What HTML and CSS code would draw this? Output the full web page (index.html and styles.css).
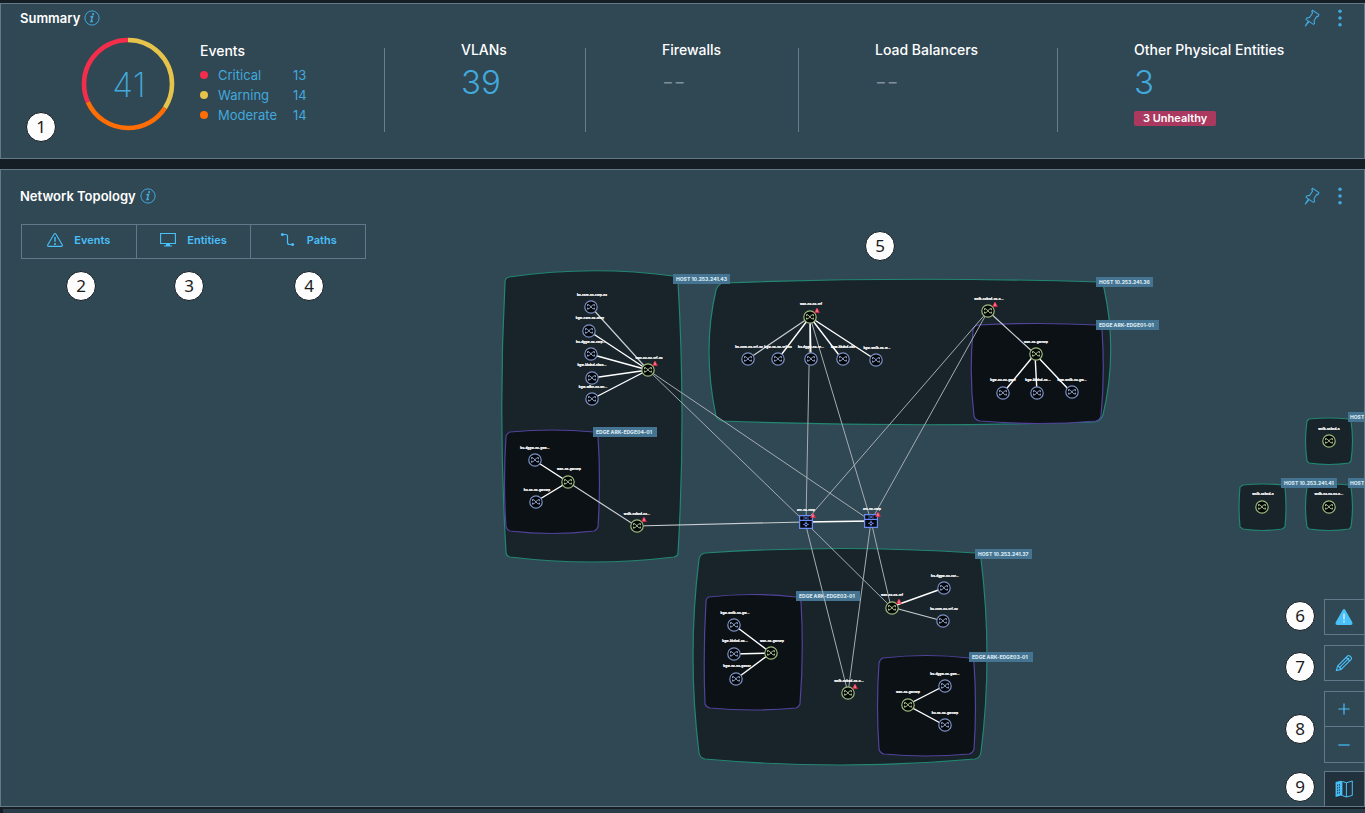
FILE: index.html
```html
<!DOCTYPE html>
<html lang="en">
<head>
<meta charset="utf-8">
<title>Network Topology</title>
<link rel="stylesheet" href="styles.css">
</head>
<body>
<svg class="defs" aria-hidden="true">
  <defs>
    <symbol id="pin" viewBox="0 0 16 18"><path d="M8.5 1.2 15 5.6 14 7.6 12.8 7.4 10 11.7 10.6 14.6 9.4 15.4 2 10.4 2.6 9 5.6 8.4 8.6 4 7.8 2.4ZM5 12.6 1 17.4M4.4 12 1.2 17" fill="none" stroke="currentColor" stroke-width="1.1" stroke-linejoin="round"/></symbol>
    <symbol id="kebab" viewBox="0 0 4 18"><circle cx="2" cy="2.2" r="1.8"/><circle cx="2" cy="9" r="1.8"/><circle cx="2" cy="15.8" r="1.8"/></symbol>
    <symbol id="info" viewBox="0 0 16 16"><circle cx="8" cy="8" r="7.1" fill="none" stroke="currentColor"/><path d="M6.4 6.8 8.6 6.4 7 11.6 9 11.2" fill="none" stroke="currentColor" stroke-width="1.4"/><circle cx="9.1" cy="4.1" r="1.1"/></symbol>
    <g id="arrows"><path d="M-3.6-2.2H-2L1.8 1.8H3.4M-3.6 1.8H-2L1.8-2.2H3.4" fill="none" stroke-width=".9"/><path d="M-3.4-2.6V-.8M3.4-2.6V-.8M-3.4 2.4V.6M3.4 2.4V.6" stroke-width=".9"/></g>
    <g id="green"><circle r="6.2" fill="#030607" stroke="#9dbb7d" stroke-width="1.2"/><use href="#arrows" stroke="#bcd3a0"/></g>
    <g id="blue"><circle r="6.2" fill="#030609" stroke="#7d92c4" stroke-width="1.2"/><use href="#arrows" stroke="#a0b3df"/></g>
    <g id="alert"><path d="M7-9 9.4-4.4H4.6Z" fill="#f5304f" stroke="#f5304f" stroke-width=".6"/><path d="M7-7.6V-5" stroke="#fff" stroke-width=".6"/></g>
    <g id="switch"><path d="M-6.4-6.4H6.4V6.4H-6.4Z" fill="#05080f" stroke="#6c8cf5" stroke-width="1.2"/><path d="M-6.4-1.6H6.4" stroke="#6c8cf5" stroke-width="1.2"/><path d="M-3-5H-1L1-3H3M-3-3H-1L1-5H3" fill="none" stroke="#5673c5" stroke-width=".8"/><circle cy="2.4" r="1.3" fill="none" stroke="#7896ff"/><path d="M0-.4V1M0 3.8V5.2M-2.8 2.4H-1.4M1.4 2.4H2.8" stroke="#7896ff" stroke-width=".9"/></g>
  </defs>
</svg>

<section class="panel summary">
  <header class="panel-head">
    <h2>Summary</h2>
    <button class="icon-btn info" aria-label="About summary"><svg><use href="#info"/></svg></button>
    <div class="actions">
      <button class="icon-btn pin" aria-label="Pin summary"><svg><use href="#pin"/></svg></button>
      <button class="icon-btn kebab" aria-label="Summary menu"><svg><use href="#kebab"/></svg></button>
    </div>
  </header>
  <div class="metrics">
    <div class="events">
      <svg class="donut" viewBox="0 0 94 94" role="img" aria-label="41 events">
        <g fill="none" stroke-width="4.6" transform="rotate(-90 47 47)">
          <circle cx="47" cy="47" r="44" pathLength="41" stroke="#e6c34a" stroke-dasharray="14 27"/>
          <circle cx="47" cy="47" r="44" pathLength="41" stroke="#ff6d05" stroke-dasharray="14 27" stroke-dashoffset="-14"/>
          <circle cx="47" cy="47" r="44" pathLength="41" stroke="#f42e4a" stroke-dasharray="13 28" stroke-dashoffset="-28"/>
        </g>
        <text x="48" y="60" text-anchor="middle">41</text>
      </svg>
      <div class="legend">
        <h3>Events</h3>
        <ul>
          <li><i class="dot critical"></i><a href="#critical">Critical</a><a href="#critical">13</a></li>
          <li><i class="dot warning"></i><a href="#warning">Warning</a><a href="#warning">14</a></li>
          <li><i class="dot moderate"></i><a href="#moderate">Moderate</a><a href="#moderate">14</a></li>
        </ul>
      </div>
    </div>
    <div class="metric"><h3>VLANs</h3><a class="value" href="#vlans">39</a></div>
    <div class="metric"><h3>Firewalls</h3><span class="value empty">--</span></div>
    <div class="metric"><h3>Load Balancers</h3><span class="value empty">--</span></div>
    <div class="metric"><h3>Other Physical Entities</h3><a class="value" href="#other">3</a><span class="tag">3 Unhealthy</span></div>
  </div>
  <span class="callout c1">1</span>
</section>

<section class="panel topology">
  <svg class="canvas" role="img" aria-label="Topology map">
    <g transform="translate(-1 -170)">
      <g class="host">
        <path d="M509 277Q592 265 673 276Q678 277 678 282Q686 418 678 553Q678 556 674 557Q592 567 510 557Q506 556 506 552Q498 417 505 282Q505 278 509 277Z"/>
        <path d="M722 283Q910 276 1098 282Q1102 283 1104 288Q1118 352 1103 415Q1101 421 1094 422Q910 428 722 421Q718 420 716 416Q702 350 716 290Q718 285 722 283Z"/>
        <path d="M705 553Q840 544 975 553Q980 554 981 559Q993 657 981 752Q980 758 975 759Q840 771 705 759Q700 758 699 753Q687 656 699 559Q700 554 705 553Z"/>
        <path d="M1309 419Q1329 417 1349 419L1351 421Q1354 441 1351 461L1349 463Q1329 466 1309 463L1307 461Q1304 441 1307 421Z"/>
        <path d="M1243 485Q1262 483 1282 485L1285 487Q1287 507 1285 527L1282 529Q1262 532 1243 529L1240 527Q1238 507 1240 487Z"/>
        <path d="M1309 485Q1329 483 1349 485L1351 487Q1354 507 1351 527L1349 529Q1329 532 1309 529L1307 527Q1304 507 1307 487Z"/>
      </g>
      <g class="edge">
        <path d="M510 432Q552 428 594 432Q597 433 598 436Q601 482 598 527Q597 530 594 531Q552 536 510 531Q507 530 506 527Q503 482 506 436Q507 433 510 432Z"/>
        <path d="M978 325Q1040 322 1098 325Q1101 326 1102 330Q1105 375 1101 416Q1100 420 1096 421Q1038 426 980 421Q975 420 974 416Q969 375 973 330Q974 326 978 325Z"/>
        <path d="M709 597Q752 592 796 597Q800 598 801 602Q804 653 800 704Q799 707 796 708Q752 712 710 708Q706 707 705 704Q703 653 706 602Q706 598 709 597Z"/>
        <path d="M883 658Q927 653 969 658Q974 659 974 663Q977 706 974 749Q973 753 969 754Q926 758 884 754Q880 753 879 749Q876 706 879 663Q880 659 883 658Z"/>
      </g>
      <g class="tag-box">
        <rect x="673" y="274" width="57" height="10"/><rect x="593" y="427" width="64" height="10"/><rect x="1096" y="277" width="57" height="10"/><rect x="1096" y="320" width="63" height="10"/><rect x="975" y="549" width="57" height="10"/><rect x="969" y="652" width="64" height="10"/><rect x="796" y="591" width="64" height="10"/><rect x="1281" y="478" width="56" height="10"/><rect x="1348" y="412" width="57" height="10"/><rect x="1348" y="478" width="57" height="10"/>
      </g>
      <g class="tag-text">
        <text x="676" y="281">HOST 10.253.241.43</text><text x="596" y="434">EDGE ARK-EDGE04-01</text><text x="1099" y="284">HOST 10.253.241.36</text><text x="1099" y="327">EDGE ARK-EDGE01-01</text><text x="978" y="556">HOST 10.253.241.37</text><text x="972" y="659">EDGE ARK-EDGE03-01</text><text x="799" y="598">EDGE ARK-EDGE02-01</text><text x="1284" y="485">HOST 10.253.241.41</text><text x="1350" y="419">HOST</text><text x="1350" y="485">HOST</text>
      </g>
      <path class="link far" d="M648 370 805 522M648 370 871 521M810 317 806 522M810 317 871 521M988 311 805 522M988 311 871 521M805 522 891 607M805 522 848 693M871 521 891 607M871 521 848 693"/>
      <path class="link mid" d="M591 307 648 370M568 482 636 526 805 522M810 317 748 359M988 311 1035 354M891 607 943 621"/>
      <path class="link near" d="M589 331 648 370M590 354 648 370M592 378 648 370M592 399 648 370M534 460 568 482 535 502M810 317 778 359M810 317 811 359M810 317 842 359M810 317 876 360M1035 354 1003 393M1035 354 1037 393M1035 354 1071 392M805 522 871 521M891 607 944 588M734 625 771 653 734 654M771 653 736 679M944 686 907 705 944 725"/>
      <g>
        <use href="#blue" x="591" y="307"/><use href="#blue" x="589" y="331"/><use href="#blue" x="591" y="354"/><use href="#blue" x="592" y="378"/><use href="#blue" x="592" y="399"/>
        <use href="#green" x="648" y="370"/><use href="#alert" x="648" y="370"/>
        <use href="#blue" x="535" y="460"/><use href="#blue" x="536" y="502"/><use href="#green" x="568" y="482"/>
        <use href="#green" x="637" y="526"/><use href="#alert" x="637" y="526"/>
        <use href="#green" x="810" y="317"/><use href="#alert" x="810" y="317"/>
        <use href="#blue" x="748" y="359"/><use href="#blue" x="778" y="359"/><use href="#blue" x="811" y="359"/><use href="#blue" x="843" y="359"/><use href="#blue" x="876" y="360"/>
        <use href="#green" x="988" y="311"/><use href="#alert" x="988" y="311"/><use href="#green" x="1036" y="354"/>
        <use href="#blue" x="1003" y="393"/><use href="#blue" x="1037" y="393"/><use href="#blue" x="1072" y="392"/>
        <use href="#switch" x="806" y="522"/><use href="#alert" x="806" y="522"/><use href="#switch" x="871" y="521"/><use href="#alert" x="871" y="521"/>
        <use href="#green" x="892" y="608"/><use href="#alert" x="892" y="608"/><use href="#blue" x="944" y="588"/><use href="#blue" x="943" y="621"/>
        <use href="#green" x="848" y="693"/><use href="#alert" x="848" y="693"/>
        <use href="#blue" x="734" y="625"/><use href="#blue" x="734" y="654"/><use href="#blue" x="736" y="679"/><use href="#green" x="771" y="653"/>
        <use href="#green" x="908" y="705"/><use href="#blue" x="945" y="686"/><use href="#blue" x="945" y="725"/>
        <use href="#green" x="1329" y="441"/><use href="#green" x="1262" y="507"/><use href="#green" x="1329" y="507"/>
      </g>
      <g class="node-text">
        <text x="592" y="296">bu-core-nx-corp-nx</text><text x="590" y="319">bgw-core-nx-ntwy</text><text x="591" y="343">bu-dggw-nx-corp...</text><text x="592" y="366">bgw-kbdnd-nbox...</text><text x="593" y="388">bgw-wlbn-nx-wr...</text><text x="649" y="359">wan-nx-nx-vrf-nx</text>
        <text x="535" y="449">bu-dggw-nx-gwe...</text><text x="537" y="491">bu-nx-nx-gwcorp</text><text x="569" y="470">wan-nx-gwcorp</text><text x="637" y="515">wnlb-nxbnd-nx...</text>
        <text x="811" y="305">wan-nx-nx-vrf</text><text x="749" y="348">bu-core-nx-vrf-nx</text><text x="778" y="348">bgw-nx-nx-vrf-nx</text><text x="811" y="348">bu-dggw-nx-vr...</text><text x="843" y="348">bgw-kbdnd-nbx</text><text x="877" y="349">bgw-wnlb-nx-w...</text>
        <text x="989" y="300">wnlb-nxbnd-nx-n...</text><text x="1036" y="343">wan-nx-gwcorp</text><text x="1003" y="381">bgw-nx-nx-gwor</text><text x="1038" y="381">bgw-kbdnd-nx...</text><text x="1072" y="381">bgw-wnlb-nx-gw...</text>
        <text x="806" y="511">arc-nx-corp</text><text x="872" y="510">arc-nx-corp</text>
        <text x="892" y="596">wan-nx-nx-vrf</text><text x="945" y="577">bu-dggw-nx-cor...</text><text x="944" y="610">bu-core-nx-vrf-nx</text><text x="849" y="682">wnlb-nxbnd-nx-n...</text>
        <text x="735" y="614">bgw-wnlb-nx-gw...</text><text x="735" y="642">bgw-kbdnd-nx...</text><text x="737" y="667">bgw-nx-nx-gwcor</text><text x="772" y="642">wan-nx-gwcorp</text>
        <text x="908" y="693">wan-nx-gwcorp</text><text x="945" y="675">bu-dggw-nx-gwe...</text><text x="945" y="714">bu-nx-nx-gwcorp</text>
        <text x="1329" y="430">wnlb-nxbnd-n</text><text x="1263" y="495">wnlb-nxbnd-n</text><text x="1329" y="495">wnlb-nx-nx-nx-n...</text>
      </g>
    </g>
  </svg>

  <header class="panel-head">
    <h2>Network Topology</h2>
    <button class="icon-btn info" aria-label="About network topology"><svg><use href="#info"/></svg></button>
    <div class="actions">
      <button class="icon-btn pin" aria-label="Pin network topology"><svg><use href="#pin"/></svg></button>
      <button class="icon-btn kebab" aria-label="Network topology menu"><svg><use href="#kebab"/></svg></button>
    </div>
  </header>
  <div class="filters">
    <button><svg viewBox="0 0 16 16"><path d="M7 2.2Q8 .8 9 2.2L15.2 12.8Q15.8 14.4 14.2 14.4H1.8Q.2 14.4.8 12.8Z" fill="none" stroke="currentColor" stroke-width="1.1"/><path d="M8 5V9.8" stroke="currentColor" stroke-width="1.4"/><circle cx="8" cy="12" r="1"/></svg>Events</button>
    <button><svg viewBox="0 0 16 16"><path d="M.6 1.5H15.4V11.5H.6Z" fill="none" stroke="currentColor" stroke-width="1.1"/><path d="M6 11.5H10V13.4H12V14.6H4V13.4H6Z"/></svg>Entities</button>
    <button><svg viewBox="0 0 16 16"><path d="M2 2.5H5.5Q7.5 2.5 7.5 4.5V10.5Q7.5 12.5 9.5 12.5H13" fill="none" stroke="currentColor" stroke-width="1.2"/><circle cx="2.4" cy="2.5" r="1.5"/><circle cx="12.6" cy="12.5" r="1.5"/></svg>Paths</button>
  </div>

  <div class="tools">
    <div class="tool-group"><button aria-label="Show alerts"><svg viewBox="0 0 18 18"><path d="M7.8 1.8Q9 .4 10.2 1.8L17.4 14.6Q18 16.8 16 17H2Q0 16.8.6 14.6Z"/><path d="M9 5.6V11.4M9 12.8V14.6" stroke="#b9e9fb" stroke-width="1.7"/></svg></button></div>
    <div class="tool-group"><button aria-label="Edit"><svg viewBox="0 0 18 18"><path d="M1.4 16.6 2.6 12 12.6 2Q13.6 1 14.8 2L16.2 3.4Q17 4.4 16.2 5.4L6 15.4ZM2.6 12Q4 11.8 4.4 13.6 6 13.8 6 15.4M4.4 13.6 14.2 3.8M11.2 3.4 14.8 7" fill="none" stroke="currentColor" stroke-width="1.1"/></svg></button></div>
    <div class="tool-group">
      <button aria-label="Zoom in"><svg viewBox="0 0 18 18"><path d="M3.4 9H14.6M9 3.4V14.6" stroke="currentColor" stroke-width="1.2"/></svg></button>
      <button aria-label="Zoom out"><svg viewBox="0 0 18 18"><path d="M3.4 9H14.6" stroke="currentColor" stroke-width="1.2"/></svg></button>
    </div>
    <div class="tool-group"><button class="active" aria-label="Mini map"><svg viewBox="0 0 18 18"><path d="M.6 2 6 .8V15.6L.6 17ZM6 .8 7.4 1.4V16.2L6 15.6Z"/><path d="M7.4 1.4 11.4 2.8V17L7.4 15.6M11.4 2.8 17.3 1V15.4L11.4 17" fill="none" stroke="currentColor"/><path d="M2.6 4.5V15M4.4 4V14.5" stroke="#21323c" stroke-width=".9" stroke-dasharray="1.6 1"/></svg></button></div>
  </div>

  <span class="callout c2">2</span>
  <span class="callout c3">3</span>
  <span class="callout c4">4</span>
  <span class="callout c5">5</span>
  <span class="callout c6">6</span>
  <span class="callout c7">7</span>
  <span class="callout c8">8</span>
  <span class="callout c9">9</span>
</section>
<div class="footer-strip"></div>
</body>
</html>
```
FILE: styles.css
```css
* { box-sizing: border-box; }

body {
  margin: 0;
  min-height: 100vh;
  display: flex;
  flex-direction: column;
  padding-top: 3px;
  background: #151e24;
  color: #fff;
  font-family: Inter, "Liberation Sans", sans-serif;
  font-size: 13px;
}

.defs { position: absolute; width: 0; height: 0; }
h2, h3, ul { margin: 0; padding: 0; }
a { color: #42a9dc; text-decoration: none; }
button { font: inherit; color: inherit; background: none; border: 0; padding: 0; cursor: pointer; }
svg { fill: currentColor; display: block; }

.panel {
  position: relative;
  background: #304754;
  border: 1px solid #61798a;
}

.panel-head {
  position: relative;
  display: flex;
  align-items: center;
  gap: 4px;
  height: 28px;
  padding: 0 22px 0 19px;
}
.panel-head h2 { font-size: 13px; line-height: 16px; font-weight: 600; padding-bottom: 1px; }
.icon-btn { color: #42a9dc; }
.info svg { width: 16px; height: 16px; }
.actions { display: flex; align-items: center; gap: 18px; margin-left: auto; }
.pin svg { width: 16px; height: 18px; }
.kebab svg { width: 4px; height: 18px; }

.summary { height: 156px; margin-bottom: 10px; }
.metrics {
  display: grid;
  grid-template-columns: 383fr 201fr 213fr 259fr 307fr;
  margin-top: 16px;
  height: 84px;
}
.events { display: flex; align-items: center; padding-left: 80px; gap: 25px; }
.donut { width: 94px; height: 94px; flex: none; margin-top: -12px; }
.donut text { font-size: 34px; font-weight: 200; fill: #42a9dc; }
h3 { font-size: 14px; line-height: 20px; font-weight: 500; }
.legend { align-self: flex-start; margin-top: -7px; }
.legend ul { list-style: none; margin-top: 4px; }
.legend li { display: grid; grid-template-columns: 18px 75px auto; align-items: center; line-height: 20px; }
.dot { width: 8px; height: 8px; border-radius: 50%; }
.critical { background: #f42e4a; }
.warning { background: #e6c34a; }
.moderate { background: #ff6d05; }

.metric {
  display: flex;
  flex-direction: column;
  align-items: flex-start;
  padding-left: 76px;
  border-left: 1px solid #677e8d;
}
.metric h3 { margin-top: -8px; white-space: nowrap; }
.value { font-size: 33px; line-height: 44px; font-weight: 300; }
.empty { color: #81909b; font-size: 26px; }
.tag {
  margin-top: 7px;
  padding: 0 9px;
  border-radius: 2px;
  background: #aa385f;
  font-size: 11px;
  line-height: 15px;
  font-weight: 600;
}

.topology { flex: 1; min-height: 638px; overflow: hidden; }
.topology .panel-head { height: 52px; }
.canvas { position: absolute; inset: 0; width: 100%; height: 100%; }

.filters { position: relative; display: flex; width: 345px; margin: 2px 0 0 20px; border: 1px solid #61798a; }
.filters button {
  display: flex;
  flex: 1;
  align-items: center;
  justify-content: center;
  gap: 11px;
  height: 33px;
  padding-bottom: 3px;
  color: #49c0fa;
  font-size: 11px;
  font-weight: 600;
}
.filters button + button { border-left: 1px solid #61798a; }
.filters svg { width: 16px; height: 16px; }

.tools {
  position: absolute;
  right: 0;
  bottom: 0;
  display: flex;
  flex-direction: column;
  gap: 10px;
}
.tool-group { border: 1px solid #61798a; border-right: 0; }
.tool-group:last-child { border-bottom: 0; margin-top: -2px; }
.tool-group button { display: grid; place-items: center; width: 39px; height: 34px; padding-right: 2px; color: #49c0fa; }
.tool-group button + button { border-top: 1px solid #61798a; height: 36px; }
.tool-group svg { width: 18px; height: 18px; }
.tool-group .active { background: #21323c; }

.host path { fill: #18232a; stroke: #238672; stroke-width: 1.2; }
.edge path { fill: #0c1115; stroke: #51439a; stroke-width: 1.2; }
.tag-box { fill: #447491; }
.tag-text { fill: #d5e5ee; font-size: 5px; font-weight: 800; }
.link { fill: none; stroke: #fff; }
.far { stroke: #a4adb2; stroke-width: 1; }
.mid { stroke: #c8cdd0; stroke-width: 1.2; }
.near { stroke-width: 1.4; }
.node-text { fill: #fff; font-size: 3px; font-weight: 800; text-anchor: middle; stroke: #fff; stroke-width: .2; }

.callout {
  position: absolute;
  width: 30px;
  height: 30px;
  border: 1px solid #11191e;
  border-radius: 50%;
  background: #fdfdfd;
  color: #1b1b1b;
  font-family: "Noto Sans", sans-serif;
  font-size: 17px;
  line-height: 28px;
  text-align: center;
}
.c1 { left: 25px; top: 108px; }
.c2 { left: 65px; top: 101px; }
.c3 { left: 173px; top: 101px; }
.c4 { left: 293px; top: 101px; }
.c5 { left: 864px; top: 61px; }
.c6, .c7, .c8, .c9 { right: 49px; }
.c6 { bottom: 175px; }
.c7 { bottom: 124px; }
.c8 { bottom: 62px; }
.c9 { bottom: 4px; }

.footer-strip { height: 6px; margin-left: 3px; border-top: 2px solid #151e24; background: #2a3c48; }
```
